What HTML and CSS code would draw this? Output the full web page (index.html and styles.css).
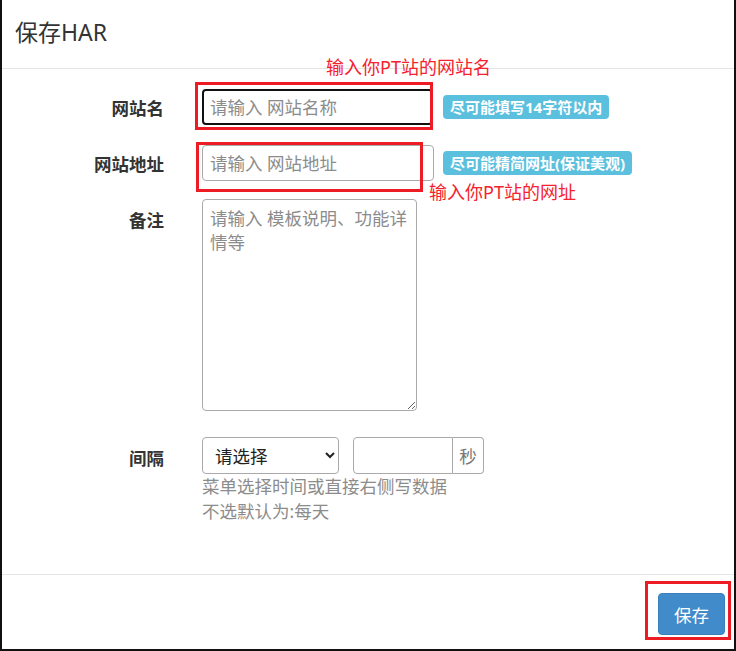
FILE: index.html
```html
<!DOCTYPE html>
<html lang="zh-CN">
<head>
<meta charset="utf-8">
<title>保存HAR</title>
<link rel="stylesheet" href="styles.css">
</head>
<body>
<div class="modal">
  <div class="modal-header">
    <h4 class="modal-title">保存HAR</h4>
  </div>
  <div class="modal-body">
    <form class="form">
      <label class="label">网站名</label>
      <div class="field">
        <input class="input input-focused" type="text" placeholder="请输入 网站名称">
        <span class="badge">尽可能填写14字符以内</span>
      </div>

      <label class="label">网站地址</label>
      <div class="field">
        <input class="input input-url" type="text" placeholder="请输入 网站地址">
        <span class="badge">尽可能精简网址(保证美观)</span>
      </div>

      <label class="label">备注</label>
      <div class="field field-area">
        <textarea class="textarea" placeholder="请输入 模板说明、功能详情等"></textarea>
      </div>

      <label class="label label-interval">间隔</label>
      <div class="field-col">
        <div class="field">
          <select class="select">
            <option>请选择</option>
          </select>
          <div class="input-group">
            <input class="input input-num" type="text">
            <span class="addon">秒</span>
          </div>
        </div>
        <p class="help">菜单选择时间或直接右侧写数据<br>不选默认为:每天</p>
      </div>
    </form>
  </div>
  <div class="modal-footer">
    <button class="btn" type="button">保存</button>
  </div>

  <div class="mark mark-name"></div>
  <div class="mark mark-url"></div>
  <div class="mark mark-btn"></div>
  <span class="note note-name">输入你PT站的网站名</span>
  <span class="note note-url">输入你PT站的网址</span>
</div>
</body>
</html>
```

FILE: styles.css
```css
* {
  box-sizing: border-box;
}

html, body {
  margin: 0;
  padding: 0;
  background: #fff;
}

body {
  font-family: "Noto Sans", "Noto Sans CJK SC", sans-serif;
  color: #333;
}

.modal {
  position: relative;
  width: 736px;
  height: 651px;
  border-left: 2px solid #111;
  border-right: 2px solid #111;
  border-bottom: 2px solid #111;
  display: flex;
  flex-direction: column;
  background: #fff;
}

.modal-header {
  height: 69px;
  border-bottom: 1px solid #e5e5e5;
  padding: 17px 13px 0;
}

.modal-title {
  margin: 0;
  font-size: 23px;
  font-weight: 400;
  line-height: 30px;
  color: #333;
}

.modal-body {
  flex: 1;
  padding-top: 20px;
  border-bottom: 1px solid #e5e5e5;
}

.form {
  display: grid;
  grid-template-columns: 162px 1fr;
  column-gap: 38px;
  align-items: start;
}

.label {
  text-align: right;
  font-weight: 700;
  font-size: 17.5px;
  line-height: 24px;
  padding-top: 7px;
  color: #333;
}

.label-interval {
  padding-top: 9px;
}

.field {
  display: flex;
  align-items: center;
  margin-bottom: 20px;
}

.field-col .field {
  margin-bottom: 0;
}

.input {
  height: 36px;
  width: 232px;
  border: 1px solid #aaa;
  border-radius: 4px;
  padding: 0 7px;
  font-family: inherit;
  font-size: 17.5px;
  color: #333;
  background: #fff;
  outline: none;
}

.input::placeholder,
.textarea::placeholder {
  color: #8c8c8c;
}

.input-focused {
  width: 231px;
  border: 2px solid #111;
  padding: 0 6px;
}

.badge {
  margin-left: 10px;
  height: 24px;
  line-height: 24px;
  padding: 0 7px;
  border-radius: 4px;
  background: #5bc0de;
  color: #fff;
  font-weight: 700;
  font-size: 15px;
  white-space: nowrap;
}

.input-url + .badge {
  margin-left: 9px;
}

.field-area {
  margin-top: -2px;
  margin-bottom: 26px;
}

.textarea {
  display: block;
  width: 215px;
  height: 212px;
  border: 1px solid #aaa;
  border-radius: 4px;
  padding: 6px 7px;
  font-family: inherit;
  font-size: 17.5px;
  line-height: 24px;
  color: #333;
  resize: vertical;
  outline: none;
}

.select {
  width: 137px;
  height: 37px;
  border: 1px solid #aaa;
  border-radius: 4px;
  padding: 0 8px;
  font-family: inherit;
  font-size: 17.5px;
  color: #222;
  background: #fff;
}

.input-group {
  display: flex;
  margin-left: 14px;
}

.input-num {
  width: 100px;
  height: 37px;
  border-radius: 4px 0 0 4px;
}

.addon {
  width: 31px;
  height: 37px;
  border: 1px solid #aaa;
  border-left: none;
  border-radius: 0 4px 4px 0;
  display: flex;
  align-items: center;
  justify-content: center;
  font-size: 17.5px;
  color: #777;
}

.help {
  margin: 0;
  font-size: 17.5px;
  line-height: 25px;
  color: #8c8c8c;
}

.modal-footer {
  height: 74px;
  display: flex;
  justify-content: flex-end;
  align-items: flex-start;
  padding: 18px 9px 0 0;
}

.btn {
  width: 67px;
  height: 42px;
  border: 1px solid #3a80bf;
  border-radius: 4px;
  background: #428bca;
  color: #fff;
  font-family: inherit;
  font-size: 17.5px;
  cursor: pointer;
}

/* annotation overlays */
.mark {
  position: absolute;
  border: 3px solid #ed1c24;
}

.mark-name {
  left: 193px;
  top: 82px;
  width: 238px;
  height: 48px;
}

.mark-url {
  left: 194px;
  top: 142px;
  width: 227px;
  height: 50px;
}

.mark-btn {
  left: 643px;
  top: 581px;
  width: 86px;
  height: 59px;
}

.note {
  position: absolute;
  font-size: 18px;
  line-height: 22px;
  color: #f5222d;
  white-space: nowrap;
}

.note-name {
  left: 324px;
  top: 56px;
}

.note-url {
  left: 427px;
  top: 181px;
}
```
